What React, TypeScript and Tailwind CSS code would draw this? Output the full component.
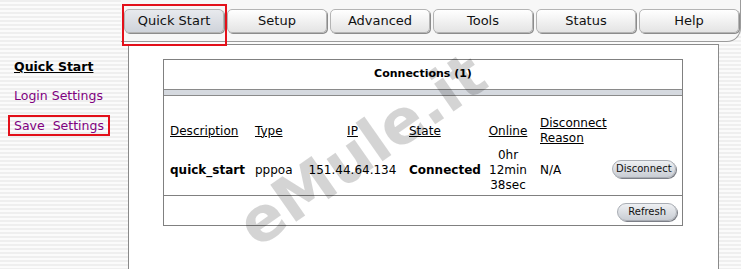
import React from 'react';

const tabs = ['Quick Start', 'Setup', 'Advanced', 'Tools', 'Status', 'Help'];

function Tab({ label, active }: { label: string; active?: boolean }) {
  return (
    <div className="relative">
      <div
        className={`w-[100px] h-[24px] flex items-center justify-center rounded-[5px] border border-[#b4b4b4] text-[13px] text-[#111] shadow-[1px_1px_0_#8c8c8c] ${
          active ? 'bg-gradient-to-b from-[#e8eaee] to-[#cfd3da]' : 'bg-gradient-to-b from-white to-[#e4e4e4]'
        }`}
      >
        {label}
      </div>
      {active && <span className="absolute -left-[2px] -right-[3px] -top-[5px] -bottom-[5px] border-2 border-[#e3101a]" />}
    </div>
  );
}

function PillButton({ label, wide }: { label: string; wide?: boolean }) {
  return (
    <button
      className={`h-[18px] rounded-full border border-[#a9adb4] bg-gradient-to-b from-[#eef0f3] to-[#c9cdd4] text-[10px] leading-none text-[#111] shadow-[1px_1px_0_#7d8088] ${
        wide ? 'px-[10px]' : 'px-[3px]'
      }`}
    >
      {label}
    </button>
  );
}

export default function App() {
  return (
    <div className="relative w-[741px] h-[269px] overflow-hidden bg-[repeating-linear-gradient(to_bottom,#efefef_0px,#efefef_2px,#fbfbfb_2px,#fbfbfb_4px)] font-['DejaVu_Sans',Verdana,sans-serif] text-black">
      <div className="flex h-[44px]">
        <div className="w-[121px]" />
        <div className="flex-1 h-[42px] bg-[#f7f7f7] border-b border-r border-[#9c9c9c] rounded-br-[14px] pl-[3px] pt-[9px] flex gap-[3px]">
          {tabs.map((t, i) => (
            <Tab key={t} label={t} active={i === 0} />
          ))}
        </div>
      </div>

      <div className="flex h-[225px]">
        <aside className="w-[128px] pl-[14px] pt-[15px] text-[12.5px] leading-[16px]">
          <div className="font-bold underline">Quick Start</div>
          <div className="mt-[13px] text-[#800080]">Login Settings</div>
          <div className="mt-[11px]">
            <span className="inline-block -ml-[6px] border-2 border-[#e3101a] px-[4px] leading-[17px] text-[#800080]">
              Save&nbsp;&nbsp;Settings
            </span>
          </div>
        </aside>

        <main className="w-[591px] bg-white border-l border-t border-r border-[#8a8a8a] pl-[34px] pt-[14px]">
          <div className="w-[520px] border border-[#808080]">
            <div className="h-[29px] flex items-center justify-center text-[11px] font-bold">Connections (1)</div>
            <div className="h-[7px] border-y border-[#8a8a8a] bg-[#d5d9df]" />
            <div className="pl-[6px] pt-[20px] pb-[2px] text-[12px] leading-[15px] border-b border-[#808080]">
              <div className="flex items-center h-[30px]">
                <div className="w-[85px] underline">Description</div>
                <div className="w-[52px] underline">Type</div>
                <div className="w-[102px] pr-[11px] text-center underline">IP</div>
                <div className="w-[77px] underline">State</div>
                <div className="w-[54px] pr-[10px] text-center underline">Online</div>
                <div className="w-[72px] underline">
                  Disconnect
                  <br />
                  Reason
                </div>
              </div>
              <div className="flex items-center h-[45px] mt-[2px]">
                <div className="w-[85px] font-bold">quick_start</div>
                <div className="w-[52px]">pppoa</div>
                <div className="w-[102px] pr-[11px] text-center">151.44.64.134</div>
                <div className="w-[77px] font-bold">Connected</div>
                <div className="w-[54px] pr-[10px] text-center">
                  0hr
                  <br />
                  12min
                  <br />
                  38sec
                </div>
                <div className="w-[72px]">N/A</div>
                <div className="-mt-[3px]">
                  <PillButton label="Disconnect" />
                </div>
              </div>
            </div>
            <div className="h-[29px] flex items-center justify-end pr-[5px]">
              <div className="-mt-[1px]">
                <PillButton label="Refresh" wide />
              </div>
            </div>
          </div>
        </main>
      </div>

      <div className="pointer-events-none absolute left-[362px] top-[150px] -translate-x-1/2 -translate-y-1/2 -rotate-[35deg] whitespace-nowrap text-[62px] font-bold leading-none text-black/[0.17]">
        eMule.it
      </div>
    </div>
  );
}
